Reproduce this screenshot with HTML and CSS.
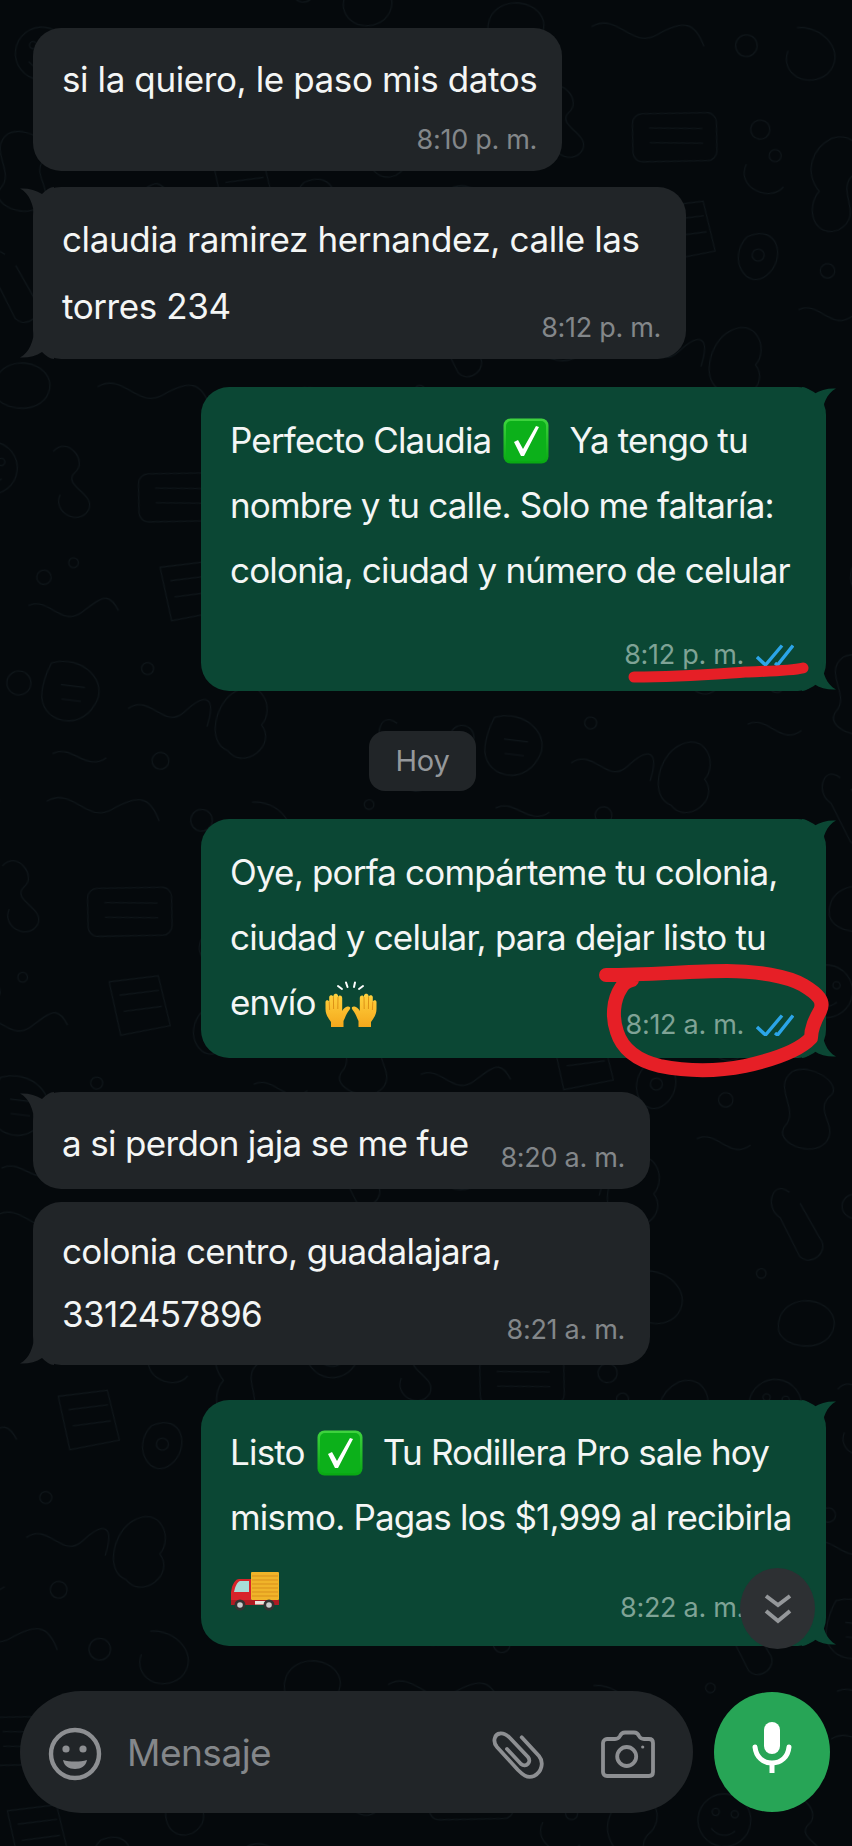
FILE: index.html
```html
<!DOCTYPE html>
<html lang="es">
<head>
<meta charset="utf-8">
<title>Chat</title>
<link rel="stylesheet" href="styles.css">
</head>
<body>
<svg class="defs" aria-hidden="true">
  <defs>
    <linearGradient id="greenbox" x1="0" y1="0" x2="0" y2="1"><stop offset="0" stop-color="#3fd43f"/><stop offset="1" stop-color="#08a812"/></linearGradient>
    <linearGradient id="handfill" x1="0" y1="0" x2="0" y2="1"><stop offset="0" stop-color="#ffd23f"/><stop offset="1" stop-color="#f5a81c"/></linearGradient>
    <symbol id="tick" viewBox="0 0 46 46">
      <rect x="0.5" y="0.5" width="45" height="45" rx="7" fill="url(#greenbox)"/>
      <rect x="3" y="3" width="40" height="40" rx="5" fill="#0cb01a"/>
      <path d="M11 24 L15 22 L20 31 L33 8 L36 9 L21 38 L18 38 Z" fill="#fff"/>
    </symbol>
    <symbol id="dblcheck" viewBox="0 0 38 22">
      <path d="M1 13 L9.5 21 L26 1.5 M19 19 L21.5 21 L37 1.5" fill="none" stroke="#2ba5e8" stroke-width="3.4"/>
    </symbol>
    <symbol id="hand" viewBox="0 0 26 34">
      <path d="M6 34 L6 29 C3 25 0.5 21 0.5 16 L0.5 9 C0.5 6.5 4 6.5 4.2 9 L4.2 4 C4.5 1.5 8 1.5 8.3 4 L8.5 2.5 C9 0 12.5 0 13 2.5 L13 4 C13.5 1.8 17.2 1.8 17.2 5 L17.2 18 C18.5 15.5 20.5 14 22.5 13.5 C25 13 26 15 24.5 16.8 C21.5 20 20.5 24 18.5 28 L18.5 34 Z" fill="url(#handfill)"/>
      <path d="M4.2 9 L4.6 17 M8.4 4 L8.6 16 M13 4 L12.8 16" fill="none" stroke="#d98b12" stroke-width="0.9"/>
    </symbol>
  </defs>
</svg>

<div class="screen">
  <svg class="wallpaper" aria-hidden="true">
    <defs>
      <pattern id="doodles" width="372" height="348" patternUnits="userSpaceOnUse" patternTransform="scale(1.2) rotate(7)">
        <g fill="none" stroke="#0f161a" stroke-width="0.9">
          <circle cx="40" cy="40" r="22"/><circle cx="32" cy="34" r="3"/><circle cx="48" cy="34" r="3"/><path d="M30 48 C36 54 44 54 50 48"/>
          <path d="M90 20 C100 5 120 25 110 35 C100 48 130 50 125 65 C118 80 95 70 100 55"/>
          <rect x="165" y="25" width="70" height="40" rx="8" transform="rotate(-8 200 45)"/><path d="M178 40 L222 35 M180 52 L224 47"/>
          <circle cx="270" cy="30" r="8"/><circle cx="285" cy="50" r="5"/><path d="M262 60 C255 80 285 90 295 75"/>
          <path d="M20 110 C5 125 30 140 20 155 C10 170 45 180 55 165 C65 150 40 140 55 125 C62 115 35 100 20 110Z"/>
          <circle cx="95" cy="125" r="6"/><circle cx="118" cy="110" r="4"/><path d="M85 150 C100 140 115 165 130 150 S150 130 160 145"/>
          <path d="M190 105 L230 95 L245 135 L205 148 Z"/><path d="M200 115 L232 107 M205 128 L236 120"/>
          <path d="M270 120 C295 105 305 135 290 150 C275 165 255 140 270 120Z"/><circle cx="281" cy="134" r="5"/>
          <path d="M330 30 C350 20 365 45 350 60 C340 75 365 90 345 105 C325 115 315 90 325 75 C310 60 315 40 330 30Z"/><circle cx="340" cy="140" r="6"/><path d="M320 175 C335 165 350 190 365 175"/>
          <path d="M30 210 C15 200 10 225 25 232 L45 262 C55 270 70 255 60 245 L40 218"/><circle cx="85" cy="215" r="10"/>
          <path d="M110 195 C135 185 160 205 150 225 C140 250 105 245 105 220 C105 210 108 200 110 195Z"/><path d="M120 212 L140 212 M122 224 L138 224"/>
          <circle cx="190" cy="190" r="5"/><path d="M178 225 C195 210 210 240 225 222 S250 205 245 232"/>
          <path d="M265 200 C285 185 300 210 290 225 C305 240 280 265 265 250 C245 245 250 210 265 200Z"/>
          <circle cx="210" cy="265" r="7"/><path d="M120 270 C135 260 150 282 165 268"/><circle cx="15" cy="280" r="4"/>
          <path d="M40 305 C55 290 85 300 80 320 C75 340 40 340 35 325 C33 318 35 310 40 305Z"/><path d="M120 310 C140 295 155 325 175 310 S205 295 215 315"/><circle cx="250" cy="310" r="9"/><path d="M290 290 C310 285 335 305 320 325 C305 340 280 330 285 310"/>
        </g>
      </pattern>
    </defs>
    <rect width="100%" height="100%" fill="url(#doodles)"/>
  </svg>

  <main class="chat">
    <article class="bubble in w-short m-one">
      <p class="text">si la quiero, le paso mis datos</p>
      <div class="meta"><time>8:10 p. m.</time></div>
    </article>

    <article class="bubble in w-long m-two tail-top tail-bottom">
      <p class="text">claudia ramirez hernandez, calle las torres 234</p>
      <div class="meta"><time>8:12 p. m.</time></div>
    </article>

    <article class="bubble out m-three tail-top tail-bottom">
      <p class="text">Perfecto Claudia <svg class="emoji"><use href="#tick"/></svg>&nbsp; Ya tengo tu nombre y tu calle. Solo me faltaría: colonia, ciudad y número de celular</p>
      <div class="meta"><time>8:12 p. m.</time><svg class="checks"><use href="#dblcheck"/></svg></div>
    </article>

    <div class="day"><span>Hoy</span></div>

    <article class="bubble out m-four tail-top tail-bottom">
      <p class="text">Oye, porfa compárteme tu colonia, ciudad y celular, para dejar listo tu envío <svg class="emoji-hands" viewBox="0 0 52 46"><use href="#hand" x="0" y="12" width="26" height="34"/><use href="#hand" x="-52" y="12" width="26" height="34" transform="scale(-1 1)"/><path d="M13 5 L17 8 M21 1.5 L22.5 6 M30 1.5 L29 6 M38 5 L34 8" stroke="#fff" stroke-width="2" stroke-linecap="round"/></svg></p>
      <div class="meta"><time>8:12 a. m.</time><svg class="checks"><use href="#dblcheck"/></svg></div>
    </article>

    <article class="bubble in w-mid m-five tail-top">
      <p class="text">a si perdon jaja se me fue</p>
      <div class="meta"><time>8:20 a. m.</time></div>
    </article>

    <article class="bubble in w-mid m-six tail-bottom">
      <p class="text">colonia centro, guadalajara, 3312457896</p>
      <div class="meta"><time>8:21 a. m.</time></div>
    </article>

    <article class="bubble out m-seven tail-top tail-bottom">
      <p class="text">Listo <svg class="emoji"><use href="#tick"/></svg>&nbsp; Tu Rodillera Pro sale hoy mismo. Pagas los $1,999 al recibirla <svg class="emoji-truck" viewBox="0 0 50 39"><rect x="21" y="0" width="28" height="28" rx="1" fill="#f0b429"/><path d="M22 4 H48 M22 8 H48 M22 12 H48 M22 16 H48 M22 20 H48 M22 24 H48" stroke="#d98f1c" stroke-width="1"/><path d="M21 7 H9 C6 7 4 10 2 15 L1 20 V33 H49 V28 H21 Z" fill="#d8232a"/><path d="M10 9 H19 V20 H4 C5 15 7 10 10 9Z" fill="#a8dcd8"/><path d="M1 28 H49 V33 H1Z" fill="#b01b22"/><rect x="25" y="29" width="10" height="3.5" fill="#e9e4dc"/><circle cx="10" cy="33" r="5.5" fill="#333"/><circle cx="10" cy="33" r="2.8" fill="#ccc"/><circle cx="39" cy="33" r="5.5" fill="#333"/><circle cx="39" cy="33" r="2.8" fill="#ccc"/></svg></p>
      <div class="meta"><time>8:22 a. m.</time><svg class="checks"><use href="#dblcheck"/></svg></div>
    </article>
  </main>

  <footer class="composer">
    <div class="field">
      <svg class="ic" viewBox="0 -2 90 80" aria-hidden="true">
        <circle cx="45" cy="40" r="24" fill="none" stroke="#8d8f92" stroke-width="4.4"/>
        <circle cx="36" cy="35" r="3.6" fill="#8d8f92"/><circle cx="53" cy="35" r="3.6" fill="#8d8f92"/>
        <path d="M33 46 C40 48 50 48 57 46 C56 52 51 55 45 55 C39 55 34 52 33 46Z" fill="#8d8f92"/>
      </svg>
      <span class="placeholder">Mensaje</span>
      <svg class="ic-narrow" viewBox="0 -2 66 80" aria-hidden="true">
        <path d="M41.7 23.3 L59 42 C64 48 62 58 54 62 C47 65 42 60 38 56 L17 33 C12 27 15 20 20 19.5 C24 19 27 21 30 24 L48 43 C52 48 46 54 41 50 L27 35" fill="none" stroke="#8d8f92" stroke-width="3.8" stroke-linecap="round" stroke-linejoin="round"/>
      </svg>
      <svg class="ic-narrow" viewBox="0 -2 66 80" aria-hidden="true">
        <path d="M7 25 H15 C18 25 19 24 20 22 C21 19.5 22 18.5 25 18.5 H34 C37 18.5 38 19.5 39 22 C40 24 41 25 44 25 H49 C51.5 25 53 26.5 53 29 V58 C53 60.5 51.5 62 49 62 H7 C4.5 62 3 60.5 3 58 V29 C3 26.5 5 25 7 25Z" fill="none" stroke="#8d8f92" stroke-width="3.8" stroke-linejoin="round"/>
        <circle cx="26.7" cy="42.5" r="9.5" fill="none" stroke="#8d8f92" stroke-width="3.8"/>
        <circle cx="42.7" cy="33" r="1.6" fill="#8d8f92"/>
      </svg>
    </div>
    <button class="mic" type="button" aria-label="Grabar">
      <svg viewBox="0 0 44 60" aria-hidden="true">
        <rect x="14" y="0" width="16" height="32" rx="8" fill="#fff"/>
        <path d="M5 25 C6 35 13 41 22 41 C31 41 38 35 39 25" fill="none" stroke="#fff" stroke-width="5" stroke-linecap="round"/>
        <path d="M22 41 V51" fill="none" stroke="#fff" stroke-width="5"/>
      </svg>
    </button>
  </footer>

  <svg class="ink" viewBox="0 0 852 1846" aria-hidden="true">
    <path class="ink-line" d="M634 677 C680 677 715 674 745 672 C770 671 790 671 803 668"/>
    <path class="ink-ring" d="M606 975 C650 975 690 971 727 971 C757 971 787 976 803 985 C818 994 825 1001 820 1011 C815 1020 811 1028 811 1038 C798 1052 772 1060 745 1066 C720 1071 690 1072 660 1066 C635 1060 622 1048 617 1032 C612 1018 613 1000 621 988 C623 984 628 981 632 980"/>
  </svg>

  <div class="scroll-down">
    <svg viewBox="0 0 30 32" aria-hidden="true">
      <path d="M3 3 L15 12 L27 3 M3 18 L15 28 L27 18" fill="none" stroke="#94979a" stroke-width="4"/>
    </svg>
  </div>
</div>
</body>
</html>
```

FILE: styles.css
```css
* { box-sizing: border-box; }
html, body { margin: 0; padding: 0; background: #05090c; }
.defs { position: absolute; width: 0; height: 0; }
.screen {
  position: relative;
  width: 852px;
  height: 1846px;
  overflow: hidden;
  background: #05090c;
  font-family: Inter, "Liberation Sans", sans-serif;
  display: flex;
  flex-direction: column;
}
.wallpaper { position: absolute; inset: 0; width: 100%; height: 100%; }
.chat {
  position: relative;
  display: flex;
  flex-direction: column;
  padding: 28px 26px 0 33px;
}
.bubble {
  position: relative;
  border-radius: 28px;
  padding: 19px 29px 16px;
}
.in { background: #212528; align-self: flex-start; --tail: #212528; }
.out { background: #0b4734; align-self: flex-end; width: 625px; --tail: #0b4734; }
.w-short { width: 529px; }
.w-long { width: 653px; }
.w-mid { width: 617px; }

.tail-top::before, .tail-bottom::after {
  content: "";
  position: absolute;
  width: 34px;
  height: 30px;
  background: var(--tail);
  clip-path: path("M14 0 C14 12 9 24 0 28.5 C8 29 16 27 22 23 C26 27 30 30 34 30 L34 0 Z");
}
.in.tail-bottom::after { left: -13px; bottom: 0; }
.in.tail-top::before { left: -13px; top: 0; transform: scaleY(-1); }
.out.tail-bottom::after { right: -10px; bottom: 0; transform: scaleX(-1); }
.out.tail-top::before { right: -10px; top: 0; transform: scale(-1, -1); }

.text {
  margin: 0;
  color: #f4f6f5;
  font-size: 35px;
  line-height: 65px;
  letter-spacing: -0.65px;
}
.m-one .text, .m-two .text { letter-spacing: -0.4px; }
.out .text { letter-spacing: -0.82px; }
.meta {
  position: relative;
  height: 30px;
  display: flex;
  justify-content: flex-end;
  align-items: center;
  gap: 12px;
  color: #83878a;
  font-size: 27px;
  line-height: 30px;
  letter-spacing: -0.3px;
}
.in .meta { margin-right: -4px; }
.out .meta { color: #7fa396; margin-right: 16px; }
.checks { width: 38px; height: 22px; flex: none; margin-left: 0; }
.emoji { width: 46px; height: 46px; vertical-align: -11px; margin: 0 2px 0 3px; }
.emoji-hands { width: 52px; height: 46px; vertical-align: -12px; }
.emoji-truck { width: 50px; height: 39px; vertical-align: -16px; }

.m-one { padding: 19px 16px 16px 29px; margin-bottom: 16px; }
.m-one .meta { margin-top: 13px; margin-right: 9px; }
.m-two { padding-top: 19px; margin-bottom: 28px; }
.m-two .text { line-height: 67px; }
.m-two .meta { margin-top: -27px; }
.m-three { padding: 21px 16px 21px 29px; }
.m-three .meta { margin-top: 37px; }
.m-four { padding: 21px 16px 18px 29px; margin-bottom: 34px; }
.m-four .meta { margin-top: -25px; }
.m-five { margin-bottom: 13px; }
.m-five .meta { margin-top: -33px; }
.m-six { padding: 18px 29px 20px; margin-bottom: 35px; }
.m-six .text { line-height: 63px; }
.m-six .meta { margin-top: -31px; }
.m-seven { padding: 20px 16px 23px 29px; }
.m-seven .meta { margin-top: -22px; }

.day {
  display: flex;
  justify-content: center;
  margin: 40px 0 28px;
  padding-right: 14px;
}
.day span {
  width: 107px;
  height: 60px;
  border-radius: 16px;
  background: #212528;
  color: #95989b;
  font-size: 29px;
  line-height: 60px;
  text-align: center;
  letter-spacing: -0.3px;
}

.composer {
  position: relative;
  display: flex;
  align-items: center;
  gap: 21px;
  margin-top: 45px;
  padding: 0 22px 0 20px;
}
.field {
  flex: 1;
  height: 122px;
  border-radius: 61px;
  background: #212528;
  display: flex;
  align-items: center;
  padding: 0 27px 0 10px;
}
.ic { width: 90px; height: 80px; flex: none; }
.ic-narrow { width: 66px; height: 80px; flex: none; }
.ic-narrow + .ic-narrow { margin-left: 54px; }
.placeholder {
  flex: 1;
  padding-left: 7px;
  color: #84878a;
  font-size: 37px;
  letter-spacing: -0.5px;
}
.mic {
  width: 116px;
  height: 120px;
  border: 0;
  padding: 0;
  border-radius: 50%;
  background: #27a556;
  display: flex;
  align-items: center;
  justify-content: center;
}
.mic svg { width: 44px; height: 60px; }

.ink {
  position: absolute;
  inset: 0;
  width: 852px;
  height: 1846px;
  fill: none;
  stroke: #e61f26;
  stroke-linecap: round;
  stroke-linejoin: round;
  pointer-events: none;
}
.ink-line { stroke-width: 11; }
.ink-ring { stroke-width: 14; }
.scroll-down {
  position: absolute;
  left: 740px;
  top: 1568px;
  width: 75px;
  height: 81px;
  border-radius: 50%;
  background: #2d3033;
  display: flex;
  align-items: center;
  justify-content: center;
}
.scroll-down svg { width: 30px; height: 32px; }
```
